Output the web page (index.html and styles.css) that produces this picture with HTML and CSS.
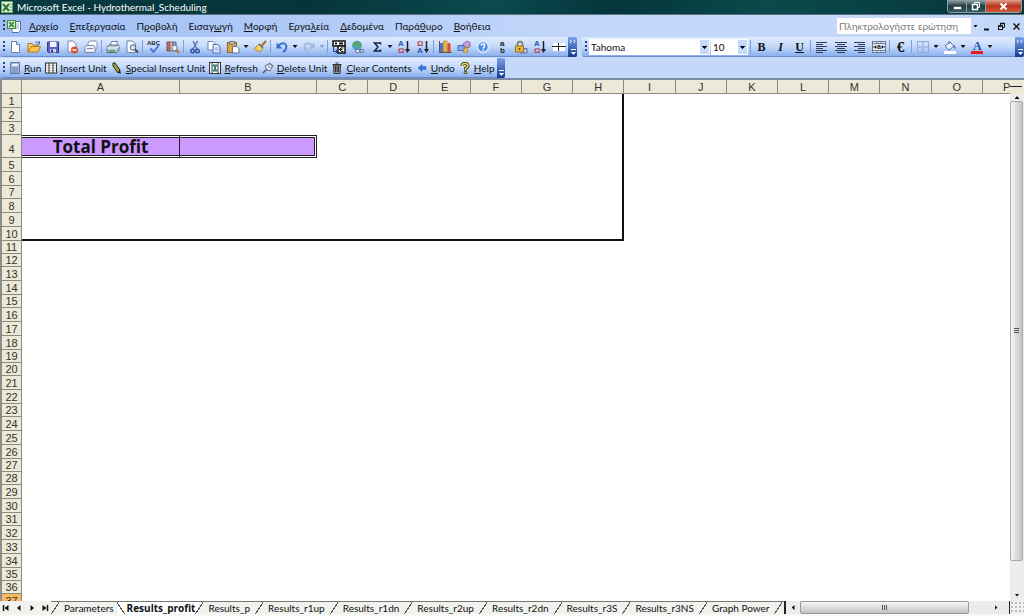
FILE: index.html
```html
<!DOCTYPE html>
<html lang="el">
<head>
	<meta charset="utf-8">
	<title>Microsoft Excel - Hydrothermal_Scheduling</title>
	<link rel="stylesheet" href="styles.css">
</head>
<body>
	<header class="titlebar">
		<svg class="logo" viewBox="0 0 12 12"><rect width="12" height="12" rx="1" fill="#e8f3e2"/><rect x=".5" y=".5" width="11" height="11" fill="none" stroke="#69a368"/><path d="M2 3l6 7M8 3l-6 7" stroke="#28752c" stroke-width="2"/><path d="M8 3h3M8 6h3M8 9h3" stroke="#69a368"/></svg>
		<h1>Microsoft Excel - Hydrothermal_Scheduling</h1>
		<div class="winbtns">
			<button class="min" aria-label="Minimize"><svg viewBox="0 0 16 11"><rect x="4.500" y="5.500" width="8" height="3" fill="#fff" stroke="#333" stroke-width=".5"/></svg></button>
			<button class="max" aria-label="Restore"><svg viewBox="0 0 16 11"><path d="M6.500 4V1.500h5v5H10" fill="none" stroke="#fff"/><rect x="4.500" y="3.500" width="5" height="5" fill="none" stroke="#fff" stroke-width="1.500"/></svg></button>
			<button class="close" aria-label="Close"><svg viewBox="0 0 20 11"><path d="M7 2.500l6 6M13 2.500l-6 6" stroke="#fff" stroke-width="2"/></svg></button>
		</div>
	</header>

	<nav class="menubar">
		<i class="grip"></i>
		<svg class="book" viewBox="0 0 14 14"><path d="M5 2.500h8.500v9l-2 2H5z" fill="#fff" stroke="#5570a0"/><path d="M7 5h5M7 7h5M7 9h5" stroke="#8aa6d8"/><rect x=".5" y="1.500" width="8" height="8" fill="#d9edcf" stroke="#3c8a3c"/><path d="M2 3l5 5M7 3L2 8" stroke="#2a7a2c" stroke-width="1.500"/></svg>
		<button><u>Α</u>ρχείο</button>
		<button><u>Ε</u>πεξεργασία</button>
		<button>Π<u>ρ</u>οβολή</button>
		<button>Εισαγ<u>ω</u>γή</button>
		<button><u>Μ</u>ορφή</button>
		<button>Εργα<u>λ</u>εία</button>
		<button><u>Δ</u>εδομένα</button>
		<button>Παρά<u>θ</u>υρο</button>
		<button><u>Β</u>οήθεια</button>
		<div class="ask">
			<input type="text" placeholder="Πληκτρολογήστε ερώτηση" aria-label="Πληκτρολογήστε ερώτηση">
			<button class="pick" aria-label="Ερωτήσεις"></button>
		</div>
		<div class="docbtns">
			<button aria-label="Minimize document"><svg viewBox="0 0 9 9"><path d="M2 7.500h5" stroke="#111" stroke-width="2"/></svg></button>
			<button aria-label="Restore document"><svg viewBox="0 0 9 9"><path d="M3.500 3V1.500h4v4H6" fill="none" stroke="#111"/><path d="M3 1.500h5M1 4h5" stroke="#111" stroke-width="1.500"/><rect x="1.500" y="4" width="4" height="3.500" fill="none" stroke="#111"/></svg></button>
			<button aria-label="Close document"><svg viewBox="0 0 9 9"><path d="M1.500 1.500l6 6M7.500 1.500l-6 6" stroke="#111" stroke-width="1.400"/></svg></button>
		</div>
	</nav>

	<div class="dock">
		<div class="toolbar standard">
			<i class="grip"></i>
			<button aria-label="New"><svg viewBox="0 0 14 14"><path d="M3.500 1.500h5l3 3v8h-8z" fill="#fff" stroke="#6d7fa8"/><path d="M8.500 1.500v3h3" fill="#d6e2f8" stroke="#6d7fa8"/></svg></button>
			<button aria-label="Open"><svg viewBox="0 0 14 14"><path d="M1 12V3.500h4l1 1.500h5v2" fill="#f7d876" stroke="#a8742a"/><path d="M1 12l3-5.500h9.500L11 12z" fill="#ffc84a" stroke="#b07a22"/><path d="M8 2.500q3-2 4.500 1M12.500 1v3h-2.500" fill="none" stroke="#456ac0"/></svg></button>
			<button aria-label="Save"><svg viewBox="0 0 14 14"><path d="M1.500 2h11v10.500h-10l-1-1z" fill="#5a63c4" stroke="#363a86"/><rect x="4" y="2" width="6.500" height="5" fill="#f1f4ff"/><rect x="4" y="9" width="6" height="3.500" fill="#cdd3ea"/><rect x="5" y="9.500" width="2" height="3" fill="#363a86"/></svg></button>
			<button aria-label="Permission"><svg viewBox="0 0 14 14"><path d="M3 1h5l3 3v8H3z" fill="#fff" stroke="#7a86a8"/><circle cx="9.500" cy="10" r="3.500" fill="#dd4b28"/><path d="M7.500 10h4" stroke="#fff" stroke-width="1.500"/></svg></button>
			<button aria-label="E-mail"><svg viewBox="0 0 14 14"><path d="M4 6V2.500L6 1h6l1 1.500V8l-2 2" fill="#fff" stroke="#8591b4"/><path d="M1 7l1.500-1.500H10L11 7v5.500H1z" fill="#eef2fc" stroke="#7a86ac"/><path d="M3 8.500h6" fill="none" stroke="#7a86ac"/></svg></button>
			<i class="sep"></i>
			<button aria-label="Print"><svg viewBox="0 0 14 14"><path d="M4 6l1.500-4.500h6L10.500 6z" fill="#fff" stroke="#6b7fa6"/><path d="M1 7l2-2h9.500l.5 1v4l-2 2.500H1z" fill="#b7c4cf" stroke="#5a6f80"/><path d="M1 8h10l2-2" fill="none" stroke="#fff"/><path d="M3 11h6" stroke="#4b9a58" stroke-width="1.500"/></svg></button>
			<button aria-label="Preview"><svg viewBox="0 0 14 14"><path d="M2 1h5.500l3 3v8.500H2z" fill="#fff" stroke="#6d7fa8"/><circle cx="8" cy="7.500" r="2.800" fill="#cfe0f5" stroke="#546583"/><path d="M10 9.500l3 3" stroke="#3d4a66" stroke-width="2"/></svg></button>
			<i class="sep"></i>
			<button aria-label="Spelling"><svg viewBox="0 0 14 14"><text x="0" y="5" class="abc">ABC</text><path d="M3.500 8.500l3 3.500 5.500-7" fill="none" stroke="#4a78d0" stroke-width="2"/></svg></button>
			<button aria-label="Research"><svg viewBox="0 0 14 14"><path d="M1 2h3v9H1z" fill="#b76c7c" stroke="#7d4a68"/><path d="M4 2h3v9H4z" fill="#e9c887" stroke="#8c7156"/><path d="M7 2h3v9H7z" fill="#9aa7d6" stroke="#59669d"/><circle cx="8.500" cy="8" r="2.700" fill="#edf2fb" stroke="#6a7594"/><path d="M10.500 10l2.500 3" stroke="#ac7a3c" stroke-width="2"/></svg></button>
			<i class="sep"></i>
			<button aria-label="Cut"><svg viewBox="0 0 14 14"><path d="M5 1l4 8M9.500 1L5 9" stroke="#5c77ae" stroke-width="1.500"/><circle cx="4.500" cy="11" r="1.800" fill="none" stroke="#2c50a8" stroke-width="1.400"/><circle cx="9.500" cy="11" r="1.800" fill="none" stroke="#2c50a8" stroke-width="1.400"/></svg></button>
			<button aria-label="Copy"><svg viewBox="0 0 14 14"><path d="M1 1.500h5l2 2V10H1z" fill="#fff" stroke="#6b83bd"/><path d="M6 4.500h4.500l2.500 2V13H6z" fill="#e9f0ff" stroke="#4e69ad"/><path d="M7.500 8h4M7.500 10h4" stroke="#7e9ad6"/></svg></button>
			<button aria-label="Paste"><svg viewBox="0 0 14 14"><rect x="1.500" y="2.500" width="9" height="10" fill="#e0a244" stroke="#9a6720"/><path d="M3.500 1.500h5V4h-5z" fill="#c9c9d2" stroke="#777"/><path d="M6.500 6.500H11l2 2V13H6.500z" fill="#fff" stroke="#5571ad"/></svg></button>
			<button class="drop" aria-label="Paste options"></button>
			<button aria-label="Format Painter"><svg viewBox="0 0 14 14"><path d="M13 1L8.500 6" stroke="#a8701c" stroke-width="2"/><path d="M6 4l4 4-3 4-6-3z" fill="#f6d36a" stroke="#b18a30"/><path d="M6 4l4 4" stroke="#666" stroke-width="1.500"/></svg></button>
			<i class="sep"></i>
			<button aria-label="Undo"><svg viewBox="0 0 14 14"><path d="M3 6q5-5 8-1 1.500 4-3 7" fill="none" stroke="#3d6dd0" stroke-width="2"/><path d="M1.500 2.500v6h6z" fill="#3d6dd0"/></svg></button>
			<button class="drop" aria-label="Undo list"></button>
			<button aria-label="Redo"><svg viewBox="0 0 14 14"><path d="M11 6Q6 1 3 5q-1.500 4 3 7" fill="none" stroke="#a3b6d8" stroke-width="2"/><path d="M12.500 2.500v6h-6z" fill="#a3b6d8"/></svg></button>
			<button class="drop off" aria-label="Redo list"></button>
			<i class="sep"></i>
			<button aria-label="Euro conversion"><svg viewBox="0 0 14 14"><rect x="1" y="1" width="12" height="5" fill="#fff" stroke="#111" stroke-width="1.500"/><path d="M3 3.500h2M7 3.500h4" stroke="#111" stroke-width="2"/><rect x="6" y="6" width="7" height="7" fill="#fff" stroke="#111" stroke-width="1.500"/><path d="M11.500 8Q8 7 8 9.500T11.500 11.500M7 9.500h3.500" fill="none" stroke="#111"/><path d="M1.500 7v4.500H5M3.500 9.500l2 2-2 2" fill="none" stroke="#1c3c9a"/></svg></button>
			<button aria-label="Hyperlink"><svg viewBox="0 0 14 14"><circle cx="6" cy="5.500" r="4.800" fill="#4c9ad8"/><path d="M3 2q4-2 4 1T4 6 3 9Q0 6 3 2zM8 2l2.500 3-1 4-3-3z" fill="#5aa858"/><rect x="4.500" y="9.500" width="4.500" height="3" rx="1.500" fill="#eef" stroke="#66718a"/><rect x="8.500" y="9.500" width="4.500" height="3" rx="1.500" fill="none" stroke="#66718a"/></svg></button>
			<button aria-label="AutoSum"><svg viewBox="0 0 14 14"><path d="M10.500 4.500V3H4.500L8 7l-3.500 4h6V9.500" fill="none" stroke="#16213c" stroke-width="1.500"/></svg></button>
			<button class="drop" aria-label="AutoSum list"></button>
			<button aria-label="Sort Ascending"><svg viewBox="0 0 14 14"><text x="1" y="6" class="sa">A</text><text x="1" y="13" class="sz">Ω</text><path d="M10.500 1v10" stroke="#222" stroke-width="1.500"/><path d="M8 9h5l-2.500 4z" fill="#222"/></svg></button>
			<button aria-label="Sort Descending"><svg viewBox="0 0 14 14"><text x="1" y="6" class="sz">Ω</text><text x="1" y="13" class="sa">A</text><path d="M10.500 1v10" stroke="#222" stroke-width="1.500"/><path d="M8 9h5l-2.500 4z" fill="#222"/></svg></button>
			<i class="sep"></i>
			<button aria-label="Chart Wizard"><svg viewBox="0 0 14 14"><path d="M1.500 1v11.500h12" fill="none" stroke="#555"/><rect x="2" y="3" width="3" height="9" fill="#4d73cf"/><rect x="5.500" y="1" width="3.500" height="11" fill="#eeb32e" stroke="#a8742a" stroke-width=".5"/><rect x="9.500" y="3" width="3" height="9" fill="#d3502f"/></svg></button>
			<button aria-label="Drawing"><svg viewBox="0 0 14 14"><path d="M6 4l4-3 3 1.500V7l-4 1-3-1z" fill="#c8a1dc" stroke="#8a66ae"/><rect x="1" y="5.500" width="6" height="5" fill="#86a8ea" stroke="#4f6cb6"/><path d="M9 6l2 6H6z" fill="#f5cc5b" stroke="#b38a2c"/></svg></button>
			<button aria-label="Help"><svg viewBox="0 0 14 14"><circle cx="7" cy="7" r="5.500" fill="#4d8be8" stroke="#dce9ff" stroke-width="1.500"/><path d="M5 5.500Q5.500 3.500 7.500 4T8 7L7 8.500" fill="none" stroke="#fff" stroke-width="1.500"/><path d="M7 9.500v1.500" stroke="#fff" stroke-width="1.500"/></svg></button>
			<button aria-label="Replace"><svg viewBox="0 0 14 14"><text x="5" y="6" class="ab">a</text><text x="5" y="13" class="ab">b</text></svg></button>
			<button aria-label="Protect"><svg viewBox="0 0 14 14"><path d="M3.500 6V4q0-2.500 2.500-2.500T8.500 4v2" fill="none" stroke="#7b7566" stroke-width="1.500"/><rect x="1.500" y="6" width="8" height="6" fill="#ecb63c" stroke="#9a7424"/><path d="M5.500 8v2" stroke="#553f10" stroke-width="1.500"/><path d="M10 8.500h3V13H6" fill="none" stroke="#627196"/></svg></button>
			<button aria-label="Sort"><svg viewBox="0 0 14 14"><text x="1" y="6" class="sa">A</text><text x="1" y="13" class="sz">Ω</text><path d="M10.500 1v10" stroke="#222" stroke-width="1.500"/><path d="M8 9h5l-2.500 4z" fill="#222"/></svg></button>
			<button aria-label="Freeze panes"><svg viewBox="0 0 14 14"><rect x="1" y="3" width="12" height="8" fill="#fff"/><path d="M0 6.500h14M6.500 3v8" stroke="#222"/></svg></button>
			<button class="more" aria-label="Toolbar options"><svg viewBox="0 0 8 20"><path d="M1 3l1.500 1.500L1 6M4.500 3L6 4.500 4.500 6M2 12.500h5" fill="none" stroke="#fff"/><path d="M2 15h5l-2.500 3z" fill="#fff"/></svg></button>
		</div>
		<div class="toolbar formatting">
			<i class="grip"></i>
			<div class="combo font"><select aria-label="Font"><option>Tahoma</option></select></div>
			<div class="combo size"><select aria-label="Font size"><option>10</option></select></div>
			<i class="sep"></i>
			<button class="letter" aria-label="Bold"><b>B</b></button>
			<button class="letter" aria-label="Italic"><b><em>I</em></b></button>
			<button class="letter" aria-label="Underline"><b><u>U</u></b></button>
			<i class="sep"></i>
			<button aria-label="Align Left"><svg viewBox="0 0 14 14"><path d="M1 2.500h11M1 4.500h7M1 6.500h11M1 8.500h7M1 10.500h11M1 12.500h7" stroke="#333c55"/></svg></button>
			<button aria-label="Center"><svg viewBox="0 0 14 14"><path d="M1 2.500h12M3 4.500h8M1 6.500h12M3 8.500h8M1 10.500h12M3 12.500h8" stroke="#333c55"/></svg></button>
			<button aria-label="Align Right"><svg viewBox="0 0 14 14"><path d="M1 2.500h11M5 4.500h7M1 6.500h11M5 8.500h7M1 10.500h11M5 12.500h7" stroke="#333c55"/></svg></button>
			<button aria-label="Merge and Center"><svg viewBox="0 0 14 14"><rect x=".5" y="1.500" width="13" height="11" fill="#e8f0ff" stroke="#6b7896"/><path d="M5 1.500v2M9 1.500v2M5 10.500v2M9 10.500v2M.5 3.500h13M.5 10.500h13" stroke="#6b7896"/><path d="M1 7h3M10 7h3" stroke="#222"/><path d="M3 5l2 2-2 2zM11 5L9 7l2 2z" fill="#222"/><text x="5" y="9" class="ma">a</text></svg></button>
			<i class="sep"></i>
			<button class="letter euro" aria-label="Euro"><b>€</b></button>
			<i class="sep"></i>
			<button aria-label="Borders"><svg viewBox="0 0 14 14"><path d="M1.500 1.500h11v11h-11zM7 1.500v11M1.500 7h11" fill="none" stroke="#92a9d2"/></svg></button>
			<button class="drop" aria-label="Borders list"></button>
			<button aria-label="Fill Color"><svg viewBox="0 0 14 14"><path d="M2 6l5-4 4 4-5 4z" fill="#eaf1ff" stroke="#50699f"/><path d="M6 4V1" stroke="#50699f"/><path d="M10 5q3 0 2.500 4Q11 9 10 5z" fill="#4a79cf"/><path d="M1 12.500h12" stroke="#fff" stroke-width="3"/></svg></button>
			<button class="drop" aria-label="Fill Color list"></button>
			<button aria-label="Font Color"><svg viewBox="0 0 14 14"><text x="3" y="10" class="fc">A</text><path d="M1 12.500h12" stroke="#f01818" stroke-width="3"/></svg></button>
			<button class="drop" aria-label="Font Color list"></button>
			<button class="more" aria-label="Toolbar options"><svg viewBox="0 0 8 20"><path d="M1 3l1.500 1.500L1 6M4.500 3L6 4.500 4.500 6M2 12.500h5" fill="none" stroke="#fff"/><path d="M2 15h5l-2.500 3z" fill="#fff"/></svg></button>
		</div>
	</div>

	<div class="dock second">
		<div class="toolbar custom">
			<i class="grip"></i>
			<button><svg viewBox="0 0 12 12"><rect x="1.500" y=".5" width="9" height="11" fill="#a9bbdc" stroke="#6478a4"/><rect x="3" y="2" width="6" height="2" fill="#e8f0ff"/><path d="M3 6h6M3 8h6M3 10h6" stroke="#4d66a0" stroke-dasharray="1.500 .7"/></svg><span><u>R</u>un</span></button>
			<button><svg viewBox="0 0 12 12"><rect x=".5" y="1" width="11" height="10" fill="#f8f6ea" stroke="#333"/><path d="M1 3.500h10M1 6h10M1 8.500h10" stroke="#ccc"/><path d="M4 1v10M8 1v10" stroke="#333"/></svg><span><u>I</u>nsert Unit</span></button>
			<button><svg viewBox="0 0 12 12"><path d="M2 1l2 0 5 7-2 3-5-7z" fill="#96a63c" stroke="#252a10"/><path d="M7 11l3 .5L9 8z" fill="#222"/></svg><span><u>S</u>pecial Insert Unit</span></button>
			<button><svg viewBox="0 0 12 12"><rect x=".5" y=".5" width="11" height="11" fill="#fff" stroke="#333"/><path d="M3 1v10M9 1v10" stroke="#333"/><path d="M4 3h4L4 9h4z" fill="#4aa79c" stroke="#226a66"/></svg><span><u>R</u>efresh</span></button>
			<button><svg viewBox="0 0 12 12"><path d="M1 11l4-4" stroke="#555" stroke-width="1.500"/><path d="M3 4l5-3 3 3-3 5-3-1z" fill="#dfe6f4" stroke="#667391"/><circle cx="8" cy="4" r="1.500" fill="#fff" stroke="#8893ac"/></svg><span><u>D</u>elete Unit</span></button>
			<button><svg viewBox="0 0 12 12"><path d="M2.500 3h7L9 11.500H3z" fill="#999" stroke="#333"/><path d="M1.500 2.500h9M4.500 1h3M4.500 4v6M6 4v6M7.500 4v6" stroke="#333"/></svg><span><u>C</u>lear Contents</span></button>
			<button><svg viewBox="0 0 12 12"><path d="M2 6l4-3.500v2h4v3H6v2z" fill="#3f78dc" stroke="#2858b4" stroke-width=".5"/></svg><span><u>U</u>ndo</span></button>
			<button><svg viewBox="0 0 12 12"><path d="M3 4Q3 1.500 6 1.500T9 4Q9 5.500 6.500 6.500V8.500" fill="none" stroke="#222" stroke-width="3"/><path d="M3 4Q3 1.500 6 1.500T9 4Q9 5.500 6.500 6.500V8" fill="none" stroke="#f2dc3c" stroke-width="1.500"/><circle cx="6.500" cy="10.500" r="1.300" fill="#f2dc3c" stroke="#222"/></svg><span><u>H</u>elp</span></button>
			<button class="more" aria-label="Toolbar options"><svg viewBox="0 0 8 20"><path d="M2 12.500h5" stroke="#fff"/><path d="M2 15h5l-2.500 3z" fill="#fff"/></svg></button>
		</div>
	</div>

	<main class="workbook">
		<div class="view">
			<table class="sheet">
				<colgroup><col class="c-num"><col class="c-a"><col class="c-b"><col span="13"><col class="c-last"></colgroup>
				<thead><tr id="heads"></tr></thead>
				<tbody id="rows"></tbody>
			</table>
		</div>
		<div class="vscroll">
			<div class="split"></div>
			<button class="up" aria-label="Scroll up"></button>
			<div class="vthumb"><i></i></div>
			<button class="down" aria-label="Scroll down"></button>
		</div>
	</main>

	<footer class="bottom">
		<div class="tabnav">
			<button aria-label="First sheet"><svg viewBox="0 0 10 10"><path d="M2.500 2v6" stroke="#111" stroke-width="1.500"/><path d="M7.500 2v6L3.500 5z" fill="#111"/></svg></button>
			<button aria-label="Previous sheet"><svg viewBox="0 0 10 10"><path d="M6.500 2v6L3 5z" fill="#111"/></svg></button>
			<button aria-label="Next sheet"><svg viewBox="0 0 10 10"><path d="M3.500 2v6L7 5z" fill="#111"/></svg></button>
			<button aria-label="Last sheet"><svg viewBox="0 0 10 10"><path d="M2.500 2v6l4-3z" fill="#111"/><path d="M7.500 2v6" stroke="#111" stroke-width="1.500"/></svg></button>
		</div>
		<div class="tabs">
			<button>Parameters</button>
			<button class="current">Results_profit</button>
			<button>Results_p</button>
			<button>Results_r1up</button>
			<button>Results_r1dn</button>
			<button>Results_r2up</button>
			<button>Results_r2dn</button>
			<button>Results_r3S</button>
			<button>Results_r3NS</button>
			<button>Graph Power</button>
		</div>
		<div class="hscroll">
			<button class="left" aria-label="Scroll left"></button>
			<div class="htrack"><div class="hthumb"><i></i></div></div>
			<button class="right" aria-label="Scroll right"></button>
		</div>
		<div class="corner"></div>
	</footer>

	<script type="text/javascript">
		var cols = 'ABCDEFGHIJKLMNOP'.split('');
		var heads = document.getElementById('heads');
		var rows = document.getElementById('rows');
		heads.appendChild(document.createElement('th'));
		for(var i=0;i<cols.length;i++){
			var th = document.createElement('th');
			th.innerHTML = cols[i];
			heads.appendChild(th);
		}
		for(var r=1;r<=37;r++){
			var tr = document.createElement('tr');
			var num = document.createElement('th');
			num.innerHTML = r;
			tr.appendChild(num);
			for(var c=0;c<cols.length;c++){
				var td = document.createElement('td');
				// frame round A1:H10
				if(r<=10 && c==7) td.className = 'edge-right';
				if(r==10 && c<=7) td.className += ' edge-bottom';
				if(r==4 && c==0){
					td.className = 'profit label';
					td.innerHTML = 'Total Profit';
				}
				if(r==4 && c==1) td.className = 'profit value';
				tr.appendChild(td);
			}
			if(r==4) tr.className = 'tall';
			if(r==37) tr.className = 'active';
			rows.appendChild(tr);
		}
	</script>
</body>
</html>
```
FILE: styles.css
```css
*{
	box-sizing: border-box;
}
html, body{
	height: 100%;
	margin: 0;
}
body{
	display: flex;
	flex-direction: column;
	overflow: hidden;
	background: #c4d8fa;
	font: 10px/14px Lato, "Open Sans", sans-serif;
	color: #111;
}
button, select, input{
	margin: 0;
	padding: 0;
	border: 0;
	background: none;
	font: inherit;
	color: inherit;
}
svg{
	display: block;
}
u{
	text-underline-offset: 1px;
}

/* title bar */
.titlebar{
	flex: none;
	display: flex;
	height: 15px;
	padding-left: 1px;
	background: linear-gradient(to right, #073c40, #06343a 30%, #0a4a4e 48%, #04353b 60%, #0a4a4a 75%, #06343a);
	border-bottom: 1px solid #5c7480;
	color: #fff;
}
.logo{
	width: 12px;
	height: 12px;
	margin-top: 1px;
}
.titlebar h1{
	flex: 1;
	margin: 0;
	padding-left: 4px;
	font-size: 10px;
	line-height: 14px;
	font-weight: 400;
}
.winbtns{
	display: flex;
	height: 13px;
	margin-right: 2px;
	border: 1px solid #8fa3a8;
	border-top: 0;
	border-radius: 0 0 4px 4px;
	overflow: hidden;
}
.winbtns button{
	width: 19px;
	border-right: 1px solid #8fa3a8;
	background: linear-gradient(#94a7aa, #1c3c42 50%, #35585e);
}
.winbtns button svg{
	width: 100%;
	height: 11px;
}
.winbtns .close{
	width: 35px;
	border: 0;
	background: linear-gradient(#e0a090, #b8331c 50%, #d9583a);
}

/* menu */
.menubar{
	flex: none;
	display: flex;
	align-items: center;
	height: 22px;
	padding: 0 3px;
	background: linear-gradient(to right, #9ebef5, #c4d8fa 60%);
}
.grip{
	flex: none;
	width: 2px;
	height: 12px;
	margin-right: 2px;
	background: repeating-linear-gradient(#27418a 0 2px, transparent 2px 4px);
}
.book{
	width: 14px;
	height: 14px;
	margin-right: 2px;
}
.menubar > button{
	padding: 0 5px 0 6px;
}
.ask{
	display: flex;
	width: 143px;
	height: 16px;
	margin-left: auto;
	background: #fff;
}
.ask input{
	flex: 1;
	min-width: 0;
	padding-left: 2px;
}
.ask input::placeholder{
	color: #7d7d7d;
	opacity: 1;
}
.pick, .combo::after{
	width: 9px;
}
.ask .pick{
	background: #c6daf9;
}
.pick::after, .drop::after, .up::after, .down::after{
	content: "";
	display: block;
	width: 5px;
	height: 3px;
	margin: auto;
	background: #111;
	clip-path: polygon(0 0, 100% 0, 50% 100%);
}
.docbtns{
	display: flex;
	gap: 6px;
	margin-left: 2px;
}
.docbtns button{
	width: 9px;
	height: 9px;
}

/* toolbars */
.dock{
	flex: none;
	display: flex;
	gap: 5px;
	height: 21px;
	background: #c4d8fa;
}
.second{
	height: 22px;
	border-bottom: 2px solid #7f8ca6;
}
.toolbar{
	display: flex;
	align-items: center;
	height: 20px;
	padding-left: 3px;
	border-bottom: 1px solid #6a8cc8;
	border-radius: 2px;
	background: linear-gradient(#dfebff, #c3d9fb 50%, #8bb0ee);
}
.formatting{
	flex: 1;
}
.toolbar .grip{
	margin-right: 0;
}
.formatting .grip, .custom .grip{
	margin-right: 2px;
}
.toolbar button{
	flex: none;
	width: 19px;
	height: 18px;
}
.toolbar button svg{
	width: 14px;
	height: 14px;
	margin: auto;
}
.toolbar .drop{
	width: 8px;
}
.off::after{
	background: #8ba2cc;
}
.sep{
	flex: none;
	width: 1px;
	height: 13px;
	margin: 0 1px;
	background: #7f9fd8;
}
.toolbar .more{
	width: 9px;
	height: 20px;
	margin-left: auto;
	border-radius: 0 2px 2px 0;
	background: linear-gradient(#7ba2e8, #123a94);
}
.toolbar .more svg{
	width: 8px;
	height: 20px;
}
.abc{
	font: bold 6px "Liberation Sans", sans-serif;
	fill: #223;
}
.sa, .sz{
	font: bold 8px "Liberation Sans", sans-serif;
	fill: #2f56b4;
}
.sz{
	fill: #b8404c;
}
.ab{
	font: bold 8px "Liberation Sans", sans-serif;
	fill: #222;
}
.ma{
	font: bold 7px "Liberation Sans", sans-serif;
	fill: #222;
}
.fc{
	font: bold 12px "Liberation Serif", serif;
	fill: #28509c;
}
.combo{
	display: flex;
	height: 16px;
	margin-right: 1px;
	padding-right: 1px;
	background: #fff;
}
.combo select{
	flex: 1;
	padding-left: 2px;
	appearance: none;
	outline: 0;
}
.combo::after{
	content: "";
	margin: 1px 0;
	background: linear-gradient(#111, #111) 50% 6px/5px 1px no-repeat, linear-gradient(#111, #111) 50% 7px/3px 1px no-repeat, linear-gradient(#111, #111) 50% 8px/1px 1px no-repeat, #c6daf9;
}
.font{
	width: 121px;
}
.size{
	width: 37px;
}
.toolbar .letter{
	font: 12px/18px "Liberation Serif", serif;
}
.toolbar .euro{
	font-size: 15px;
}
.custom button{
	display: flex;
	align-items: center;
	width: auto;
	gap: 3px;
	padding: 0 2px;
}
.toolbar.custom svg{
	width: 12px;
	height: 12px;
}
.custom .more{
	width: 8px;
	padding: 0;
}
.toolbar.custom .more svg{
	width: 8px;
	height: 20px;
}

/* worksheet */
.workbook{
	flex: 1;
	display: flex;
	min-height: 0;
	background: #fff;
}
.view{
	flex: 1;
	min-width: 0;
	overflow: hidden;
}
.sheet{
	width: 100%;
	table-layout: fixed;
	border-spacing: 0;
	font: 11px/12px "Liberation Sans", Arial, sans-serif;
}
.c-num{
	width: 22px;
}
.c-a{
	width: 158px;
}
.c-b{
	width: 137px;
}
.c-last{
	width: 27px;
}
.sheet th, .sheet td{
	height: 14px;
	padding: 0;
	overflow: hidden;
}
.sheet th{
	border-right: 1px solid #8c8a7c;
	border-bottom: 1px solid #8c8a7c;
	background: #ece9d8;
	color: #333;
	font-weight: 400;
}
.sheet thead th:last-child{
	padding-left: 20px;
	border-right: 0;
	text-align: left;
}
.sheet th:first-child{
	border-left: 2px solid #8d8d8d;
}
.sheet tbody tr:nth-child(8n+3) > *,
.sheet tbody tr:nth-child(8n+4) > *,
.sheet tbody tr:nth-child(8n+7) > *{
	height: 13px;
}
.sheet tbody .tall > *{
	height: 23px;
}
.sheet .tall th{
	padding-bottom: 2px;
	vertical-align: bottom;
}
.sheet .active th{
	background: #f9b85c;
}
.edge-right{
	border-right: 2px solid #111;
}
.edge-bottom{
	border-bottom: 2px solid #111;
}
.profit{
	border: 3px double #222;
	border-left: 0;
	background: #c9f;
	background-clip: padding-box;
}
.label{
	border-right: 1px solid #222;
	font: bold 17px/17px "Open Sans", "Noto Sans", sans-serif;
	text-align: center;
}

/* scroll bars */
.vscroll{
	flex: none;
	display: flex;
	flex-direction: column;
	width: 14px;
	background: #ececec;
}
.split{
	height: 14px;
	background: linear-gradient(#222, #222) 0 6px/12px 1px no-repeat, #ece9d8;
}
.up{
	flex: none;
	height: 7px;
}
.down{
	flex: none;
	height: 12px;
	margin-top: auto;
}
.up::after{
	clip-path: polygon(50% 0, 100% 100%, 0 100%);
}
.vthumb{
	flex: 0 1 460px;
	display: flex;
	align-items: center;
	justify-content: center;
	margin-right: 1px;
	border: 1px solid #aaa;
	border-radius: 2px;
	background: linear-gradient(to right, #f7f7f7, #dcdcdc 50%, #c4c4c4);
}
.vthumb i{
	width: 5px;
	height: 6px;
	background: repeating-linear-gradient(#555 0 1px, transparent 1px 2px);
}

/* sheet tabs */
.bottom{
	flex: none;
	display: flex;
	height: 15px;
	background: #f1f1ee;
	border-bottom: 2px solid #f8f8f8;
}
.tabnav{
	display: flex;
	align-items: center;
	gap: 3px;
	width: 51px;
	padding-left: 1px;
}
.tabnav button, .tabnav svg{
	width: 10px;
	height: 10px;
}
.tabs{
	flex: 1;
	display: flex;
	min-width: 0;
	overflow: hidden;
	border-top: 1px solid #777;
}
.tabs button{
	flex: none;
	display: flex;
	line-height: 12px;
	padding-right: 5px;
}
.tabs button::before, .tabs button:last-child::after{
	content: "";
	width: 8px;
	height: 12px;
	margin-right: 5px;
	background: linear-gradient(to bottom right, transparent 47%, #555 47% 56%, transparent 56%);
}
.tabs button:last-child::after{
	margin: 0 0 0 5px;
}
.tabs .current{
	margin: 0 -3px 0 -2px;
	padding-right: 3px;
	background: #fff;
	font-family: "Open Sans", sans-serif;
	font-weight: 700;
}
.tabs .current::before{
	margin-right: 2px;
	background: linear-gradient(to bottom left, transparent 47%, #555 47% 56%, transparent 56%);
}
.hscroll{
	flex: none;
	display: flex;
	width: 226px;
	border-left: 2px solid #222;
	border-right: 1px solid #222;
	background: #ececec;
}
.left{
	width: 14px;
}
.right{
	width: 26px;
}
.left::after, .right::after{
	content: "";
	display: block;
	width: 3px;
	height: 5px;
	margin: auto;
	background: #111;
	clip-path: polygon(100% 0, 100% 100%, 0 50%);
}
.right::after{
	clip-path: polygon(0 0, 100% 50%, 0 100%);
}
.htrack{
	flex: 1;
}
.hthumb{
	display: flex;
	align-items: center;
	justify-content: center;
	width: 169px;
	height: 13px;
	border: 1px solid #999;
	border-radius: 2px;
	background: linear-gradient(#f7f7f7, #dcdcdc 50%, #c4c4c4);
}
.hthumb i{
	width: 6px;
	height: 5px;
	background: repeating-linear-gradient(to right, #555 0 1px, transparent 1px 2px);
}
.corner{
	width: 14px;
	background: radial-gradient(#bbb 1px, transparent 1px) 0 0/4px 4px;
}
```
